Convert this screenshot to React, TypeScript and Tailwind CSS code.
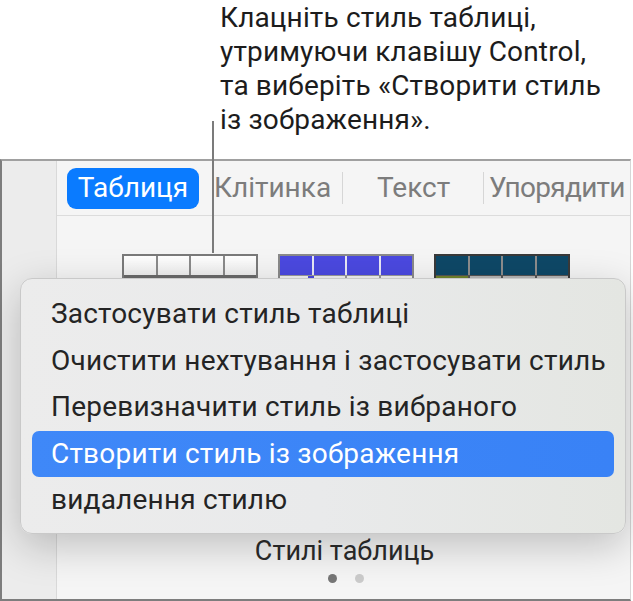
import React from "react";

const font = { fontFamily: "Roboto, 'Noto Sans', sans-serif" };

function Thumb({
  border,
  cell,
  divider,
  bottom,
}: {
  border: string;
  cell: string;
  divider: string;
  bottom: React.ReactNode;
}) {
  return (
    <div className={`w-[136px] h-[28px] flex flex-col border-2 border-b-0 ${border}`}>
      <div className={`flex h-[19px] gap-[2px] ${divider}`}>
        <div className={`flex-1 ${cell}`} />
        <div className={`flex-1 ${cell}`} />
        <div className={`flex-1 ${cell}`} />
        <div className={`flex-1 ${cell}`} />
      </div>
      {bottom}
    </div>
  );
}

export default function App() {
  const items = [
    "Застосувати стиль таблиці",
    "Очистити нехтування і застосувати стиль",
    "Перевизначити стиль із вибраного",
    "Створити стиль із зображення",
    "видалення стилю",
  ];
  return (
    <div className="relative w-[633px] h-[601px] bg-white overflow-hidden" style={font}>
      {/* callout text */}
      <div className="h-[159px] pl-[220px] pt-[1px] text-[28px] leading-[34px] text-[#1c1c1c] tracking-[0.15px]">
        <div>Клацніть стиль таблиці,</div>
        <div>утримуючи клавішу Control,</div>
        <div>та виберіть «Створити стиль</div>
        <div>із зображення».</div>
      </div>

      {/* frame */}
      <div className="h-[442px] w-[631px] flex border-t-2 border-t-[#a0a0a0] border-l-2 border-l-[#7d7d7d] border-b-2 border-b-[#7d7d7d] border-r border-r-[#d6d6d6]">
        <div className="w-[55px] bg-[#ececec] border-r border-r-[#d9d9d9]" />
        <div className="flex-1 flex flex-col bg-[#f5f5f5]">
          <div className="h-[55px] flex items-center border-b border-b-[#dcdcdc] pl-[10px] text-[28px] text-[#7c7c7c] whitespace-nowrap">
            <div className="h-[41px] w-[132px] shrink-0 rounded-[9px] bg-[#0a7bff] text-white flex items-center justify-center">
              Таблиця
            </div>
            <div className="ml-[15px] w-[118px] shrink-0">Клітинка</div>
            <div className="w-px h-[32px] shrink-0 bg-[#d6d6d6] ml-[10px]" />
            <div className="ml-[34px] w-[74px] shrink-0">Текст</div>
            <div className="w-px h-[32px] shrink-0 bg-[#d6d6d6] ml-[32px]" />
            <div className="ml-[5px] shrink-0 tracking-[-0.7px]">Упорядити</div>
          </div>
          <div className="flex pl-[65px] pt-[38px] gap-[20px]">
            <Thumb
              border="border-[#7a7a7a]"
              cell="bg-gradient-to-b from-white to-[#eeeeee]"
              divider="bg-[#8a8a8a]"
              bottom={<div className="flex-1 bg-[#6a6a6a]" />}
            />
            <Thumb
              border="border-[#8a8a8a]"
              cell="bg-[#4b49e0]"
              divider="bg-[#e8e8f5]"
              bottom={
                <div className="flex-1 flex gap-[2px] bg-[#9a9a9a] pt-[1px]">
                  <div className="flex-1 bg-[#f3f3f3] relative">
                    <div className="absolute left-[28px] top-0 w-[6px] h-[4px] bg-[#4b49e0]" />
                  </div>
                  <div className="flex-1 bg-[#f3f3f3]" />
                  <div className="flex-1 bg-[#f3f3f3]" />
                  <div className="flex-1 bg-[#f3f3f3]" />
                </div>
              }
            />
            <Thumb
              border="border-[#3a3a3a]"
              cell="bg-[#0e4867]"
              divider="bg-[#8d8d8d]"
              bottom={
                <div className="flex-1 flex gap-[2px] bg-[#555] pt-[1px]">
                  <div className="flex-1 bg-[#71842c]" />
                  <div className="flex-1 bg-[#b8b8b8]" />
                  <div className="flex-1 bg-[#b8b8b8]" />
                  <div className="flex-1 bg-[#b8b8b8]" />
                </div>
              }
            />
          </div>
          <div className="mt-[253px] text-center text-[27px] leading-[32px] text-[#2b2b2b] pl-[2px]">Стилі таблиць</div>
          <div className="flex justify-center gap-[18px] mt-[7px] pl-[4px]">
            <div className="w-[9px] h-[9px] rounded-full bg-[#767676]" />
            <div className="w-[9px] h-[9px] rounded-full bg-[#cbcbcb]" />
          </div>
        </div>
      </div>

      {/* callout line */}
      <div className="absolute left-[212px] top-[121px] w-[2px] h-[132px] bg-[#7b7b7b]" />

      {/* context menu */}
      <div className="absolute left-[20px] top-[278px] w-[606px] h-[256px] rounded-[12px] border border-[#c9c9c9] bg-gradient-to-r from-[#ececec] via-[#e9eaeb] to-[#e4e6e2] shadow-[0_12px_40px_rgba(0,0,0,0.22)] pt-[12px] px-[11px] text-[28px] text-[#242424] whitespace-nowrap tracking-[0.2px]">
        {items.map((t, i) => (
          <div
            key={i}
            className={
              i === 3
                ? "h-[46.5px] flex items-center pl-[19px] rounded-[7px] bg-gradient-to-r from-[#3f88f8] to-[#3982f6] text-white"
                : "h-[46.5px] flex items-center pl-[19px]"
            }
          >
            {t}
          </div>
        ))}
      </div>
    </div>
  );
}
